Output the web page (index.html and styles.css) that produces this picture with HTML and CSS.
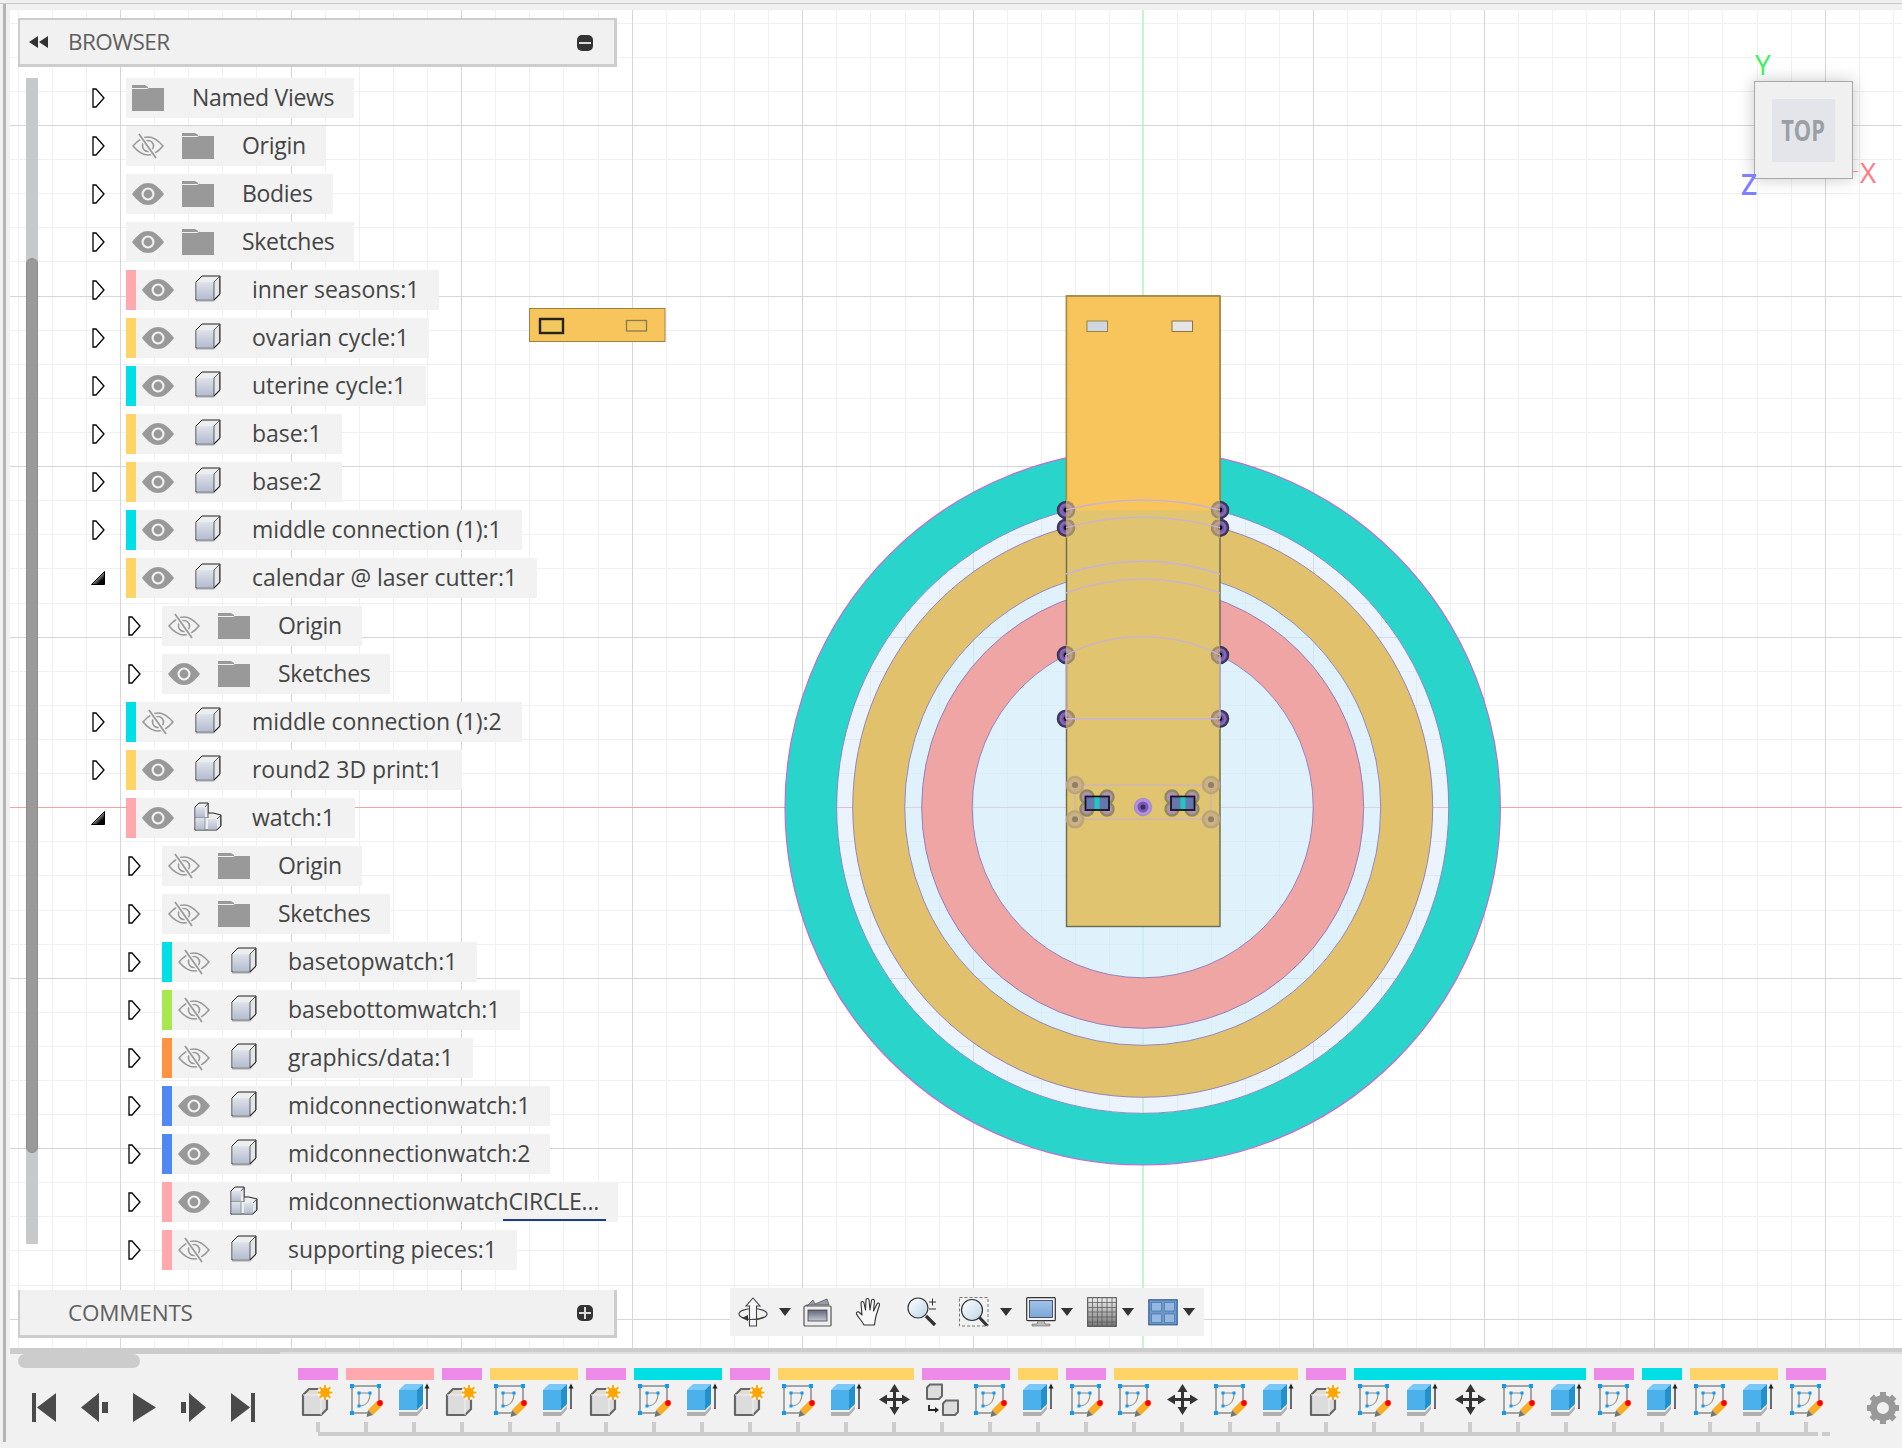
FILE: index.html
```html
<!DOCTYPE html>
<html>
<head>
    <title>Browser and Timeline</title>
    <link rel="stylesheet" href="styles.css">
</head>
<body>
    <!-- icon library -->
    <svg class="icon-defs" xmlns="http://www.w3.org/2000/svg">
        <defs>
            <linearGradient id="cube-front" x1="0" y1="0" x2="0" y2="1"><stop offset="0" stop-color="#dfe2ea"/><stop offset="1" stop-color="#b3bccf"/></linearGradient>
            <linearGradient id="twist-fill" x1="0" y1="0" x2="1" y2="1"><stop offset=".3" stop-color="#eee"/><stop offset=".75" stop-color="#000"/></linearGradient>
            <linearGradient id="screen" x1="0" y1="0" x2="0" y2="1"><stop offset="0" stop-color="#9fc3ea"/><stop offset="1" stop-color="#7ea7d6"/></linearGradient>
            <linearGradient id="glass" x1="0" y1="0" x2="1" y2="1"><stop offset="0" stop-color="#fff"/><stop offset="1" stop-color="#bcd6e6"/></linearGradient>
            <linearGradient id="fade" x1="0" y1="0" x2="0" y2="1"><stop offset="0" stop-color="#eee"/><stop offset="1" stop-color="#777"/></linearGradient>
            <linearGradient id="slate" x1="0" y1="0" x2="0" y2="1"><stop offset="0" stop-color="#5f6678"/><stop offset="1" stop-color="#c4c8d2"/></linearGradient>
        </defs>
        <symbol id="twist-closed" viewBox="0 0 13 20"><path d="M1 1 L4 1 L12 10 L4 19 L1 19 Z" fill="#fff" stroke="#000" stroke-width="1.3"/></symbol>
        <symbol id="twist-open" viewBox="0 0 14 14"><path d="M13.5 .5 V13.5 H.5 Z" fill="url(#twist-fill)" stroke="#000"/></symbol>
        <symbol id="eye" viewBox="0 0 32 22"><path d="M0 11C6 3 11 0 16 0s10 3 16 11c-6 8-11 11-16 11S6 19 0 11z" fill="#999"/><circle cx="16" cy="11" r="6.5" fill="#f2f2f2"/><circle cx="16" cy="11" r="4.4" fill="#999"/></symbol>
        <symbol id="eye-off" viewBox="0 0 32 26"><path d="M1 13C7 6 11 4 16 4s9 2 15 9c-6 7-10 9-15 9S7 20 1 13z" fill="none" stroke="#999" stroke-width="1.6"/><circle cx="16" cy="13" r="5.5" fill="none" stroke="#999" stroke-width="1.6"/><path d="M7 1 L24 25" stroke="#f2f2f2" stroke-width="4.5"/><path d="M7 1 L24 25" stroke="#999" stroke-width="1.8"/></symbol>
        <symbol id="folder" viewBox="0 0 32 26"><path d="M0 0H13L16 2V3H0Z" fill="#999"/><path d="M0 4H15L17 3H32V26H0Z" fill="#999"/></symbol>
        <symbol id="cube" viewBox="0 0 26 27"><path d="M1 7 L7 1 H25 V19 L19 25 H1 Z" fill="#eee" stroke="#222" stroke-linejoin="round"/><path d="M1.5 7 H19 V24.5 H1.5Z" fill="url(#cube-front)"/><path d="M19 7 L24.5 1.5 V19 L19 24.5Z" fill="#e4e6ea" stroke="#222" stroke-width=".7"/><path d="M1 26 H19 L25 20" fill="none" stroke="#aaa"/></symbol>
        <symbol id="multi" viewBox="0 0 28 30"><path d="M1 5 L5 1 H14 V11 H19 L27 13 V24 L23 28 H1Z" fill="#eee" stroke="#222" stroke-linejoin="round"/><path d="M1.5 5 H11 V15 H1.5Z" fill="url(#cube-front)"/><path d="M1.5 16 H11 V27.5 H1.5Z" fill="url(#cube-front)"/><path d="M14 17 H23 V27.5 H14Z" fill="url(#cube-front)"/><path d="M11 5 L14 1.5 V16 M23 17 L26.5 13.5 V24 L23 27.5" fill="#e4e6ea" stroke="#222" stroke-width=".7"/><path d="M1 15.5 H14 M11 16 V28" stroke="#7f8592" stroke-width=".8"/></symbol>

        <symbol id="tl-star" viewBox="0 0 40 36"><path d="M5 13 L11 7 H29 V27 L23 33 H5 Z" fill="#dcdcdc" stroke="#666" stroke-width="2.2" stroke-linejoin="round"/><path d="M5 13 H23 V33 M23 13 L29 7" fill="none" stroke="#f4f4f4" stroke-width=".9"/><circle cx="27" cy="10.5" r="7.5" fill="#fff"/><path d="M27 3v15M19.5 10.5h15M21.7 5.2l10.6 10.6M32.3 5.2L21.7 15.8" stroke="#fff" stroke-width="3.8"/><circle cx="27" cy="10.5" r="4.8" fill="#ffa500"/><path d="M27 3v15M19.5 10.5h15M21.7 5.2l10.6 10.6M32.3 5.2L21.7 15.8" stroke="#ffa500" stroke-width="2.1"/></symbol>
        <symbol id="tl-sketch" viewBox="0 0 40 36"><path d="M6 4 H33 M6 4 V31 H22 M33 4 V18" fill="none" stroke="#8a8a8a" stroke-width="1.5"/><path d="M13 11 V24 M13 11 H24 M24 11 C24 19 20 24 13 24" fill="none" stroke="#888" stroke-width="1.1"/><g fill="#0d9af0"><rect x="4" y="2" width="4" height="4"/><rect x="31" y="2" width="4" height="4"/><rect x="4" y="29" width="4" height="4"/><rect x="11.5" y="9.5" width="3" height="3"/><rect x="22.5" y="9.5" width="3" height="3"/><rect x="11.5" y="22.5" width="3" height="3"/></g><path d="M31 19 L36 24 L27 33 L22 28 Z" fill="#f5b024"/><path d="M22 28 L27 33 L20.5 35 Z" fill="#777"/><circle cx="34" cy="21" r="2.9" fill="#f00"/></symbol>
        <symbol id="tl-extrude" viewBox="0 0 40 36"><path d="M5 8 L11 2 H29 L23 8Z" fill="#78c8fa"/><path d="M5 8 H23 V28 H5Z" fill="#4cb0ea"/><path d="M23 8 L29 2 V22 L23 28Z" fill="#2091cb"/><path d="M5 30 H23 L29 24 V27 L23 34 H5Z" fill="#b0b0b0"/><path d="M33 27 V5" stroke="#222" stroke-width="1.3"/><path d="M33 1.5 L35.5 6.5 H30.5Z" fill="#222"/></symbol>
        <symbol id="tl-move" viewBox="0 0 40 36"><path d="M20.5 2 L25.5 10 H22 V16 H28 V12.5 L36 17.5 L28 22.5 V19 H22 V25 H25.5 L20.5 33 L15.5 25 H19 V19 H13 V22.5 L5 17.5 L13 12.5 V16 H19 V10 H15.5Z" fill="#333"/></symbol>
        <symbol id="tl-align" viewBox="0 0 40 36"><path d="M5 5.5 L8 2.5 H20 V14 L17 17 H5Z" fill="#dcdcdc" stroke="#666" stroke-width="2" stroke-linejoin="round"/><path d="M21 21.5 L24 18.5 H36 V30 L33 33 H21Z" fill="#dcdcdc" stroke="#666" stroke-width="2" stroke-linejoin="round"/><path d="M7 23 V28 H14" fill="none" stroke="#222" stroke-width="1.8"/><path d="M17 28 L13 25 V31Z" fill="#222"/></symbol>

        <symbol id="tb-orbit" viewBox="0 0 30 30"><ellipse cx="15" cy="17" rx="14" ry="5.5" fill="none" stroke="#444" stroke-width="1.2"/><path d="M15 1 L22 9 H18.5 V29 H11.5 V9 H8Z" fill="#f4f6fa" stroke="#444" stroke-width="1.1"/><path d="M12 22.5 C16 22.6 22 22 26 20" fill="none" stroke="#444" stroke-width="1.2"/><path d="M4 21 L10 18 V24Z" fill="#333"/></symbol>
        <symbol id="tb-film" viewBox="0 0 30 30"><path d="M3 10 L10 3 L12 7 L24 2 L26 8 H3Z" fill="#9a9da4" stroke="#555" stroke-width=".8"/><rect x="1" y="9" width="27" height="20" rx="1" fill="#eee" stroke="#555" stroke-width="1.2"/><rect x="5" y="13" width="19" height="11" fill="url(#slate)" stroke="#444" stroke-width=".8"/></symbol>
        <symbol id="tb-hand" viewBox="0 0 30 30"><path d="M9 28 C7 24 3 20 1.5 17 C1 15 3 14 4.5 15.5 L7 18 L6 6 C6 4 8.5 4 9 6 L10.5 13 L11 3 C11 1 14 1 14 3 L15 13 L16.5 3.5 C17 1.5 19.5 2 19.5 4 L18.5 14 L22 7 C23 5 25 6.5 24.5 8 L21 19 C20 23 20 25 19.5 28 Z" fill="#f8f8f8" stroke="#333" stroke-width="1.1" stroke-linejoin="round"/></symbol>
        <symbol id="tb-zoom" viewBox="0 0 30 30"><path d="M19 19 L28 28" stroke="#333" stroke-width="3.4"/><circle cx="11" cy="11" r="10" fill="url(#glass)" stroke="#333" stroke-width="1.2"/><path d="M22 5 H29 M25.5 1.5 V8.5 M22 12 H29" stroke="#333" stroke-width="1"/></symbol>
        <symbol id="tb-window" viewBox="0 0 30 30"><rect x=".5" y=".5" width="28.5" height="28.5" fill="none" stroke="#777" stroke-dasharray="3 2"/><path d="M20 20 L28 28.5" stroke="#333" stroke-width="3.2"/><circle cx="13" cy="13" r="10.5" fill="url(#glass)" stroke="#333" stroke-width="1.2"/></symbol>
        <symbol id="tb-monitor" viewBox="0 0 30 30"><rect x=".7" y=".7" width="28.6" height="23" rx="1" fill="#f4f4f4" stroke="#333" stroke-width="1.2"/><rect x="3.5" y="3.5" width="23" height="17" fill="url(#screen)" stroke="#335" stroke-width=".8"/><path d="M12 24 H18 L19 27 H24 V29 H6 V27 H11Z" fill="#bbb" stroke="#666" stroke-width=".6"/></symbol>
        <symbol id="tb-grid" viewBox="0 0 30 30"><rect x=".7" y=".7" width="28.6" height="28.6" fill="url(#fade)" stroke="#444"/><path d="M5.5 1V29M10.5 1V29M15 1V29M20 1V29M25 1V29M1 5.5H29M1 10.5H29M1 15H29M1 20H29M1 25H29" stroke="#555" stroke-width=".7"/></symbol>
        <symbol id="tb-views" viewBox="0 0 30 30"><rect x=".8" y="2.800" width="28.4" height="25" fill="#6f97c8" stroke="#2b5a92" stroke-width="1.1"/><path d="M3.5 5.5H13.5V14H3.5ZM16.5 5.5H26.5V14H16.5ZM3.5 17H13.5V25.5H3.5ZM16.5 17H26.5V25.5H16.5Z" fill="#93b9e3" stroke="#3a6aa2" stroke-width=".6"/></symbol>
    </svg>

    <div class="top-strip"></div>
    <div class="frame-left"></div>

    <div class="canvas">
        <svg class="drawing" xmlns="http://www.w3.org/2000/svg" width="1892" height="1338" viewBox="10 10 1892 1338">
            <defs>
                <clipPath id="in-plate"><rect x="1066" y="296" width="154" height="631"/></clipPath>
                <g id="vtx"><circle r="8" fill="#8a64c4" stroke="#3d3955" stroke-width="2.6"/><circle r="4.2" fill="#6b58a0"/><circle r="2.4" fill="#111"/></g>
                <g id="vtx-pale"><circle r="8" fill="#ccb183" stroke="#bca47c" stroke-width="2.6"/><circle r="3" fill="#8f7f6a"/></g>
                <g id="vtx-mid"><circle r="6.5" fill="#b48fb4" stroke="#8e8a5f" stroke-width="2.4"/></g>
            </defs>
            <!-- grid -->
            <path class="grid-minor" d="M18 10V1348M52 10V1348M86 10V1348M154 10V1348M188 10V1348M222 10V1348M256 10V1348M325 10V1348M359 10V1348M393 10V1348M427 10V1348M495 10V1348M529 10V1348M563 10V1348M598 10V1348M666 10V1348M700 10V1348M734 10V1348M768 10V1348M836 10V1348M870 10V1348M905 10V1348M939 10V1348M1007 10V1348M1041 10V1348M1075 10V1348M1109 10V1348M1177 10V1348M1211 10V1348M1245 10V1348M1279 10V1348M1347 10V1348M1381 10V1348M1416 10V1348M1450 10V1348M1518 10V1348M1552 10V1348M1586 10V1348M1620 10V1348M1688 10V1348M1722 10V1348M1757 10V1348M1791 10V1348M1859 10V1348M1893 10V1348"/>
            <path class="grid-minor" d="M10 23H1902M10 57H1902M10 91H1902M10 159H1902M10 193H1902M10 227H1902M10 261H1902M10 330H1902M10 364H1902M10 398H1902M10 432H1902M10 500H1902M10 534H1902M10 568H1902M10 603H1902M10 671H1902M10 705H1902M10 739H1902M10 773H1902M10 841H1902M10 875H1902M10 910H1902M10 944H1902M10 1012H1902M10 1046H1902M10 1080H1902M10 1114H1902M10 1182H1902M10 1216H1902M10 1250H1902M10 1285H1902"/>
            <path class="grid-major" d="M120 10V1348M291 10V1348M461 10V1348M632 10V1348M802 10V1348M973 10V1348M1313 10V1348M1484 10V1348M1654 10V1348M1825 10V1348M10 125H1902M10 296H1902M10 466H1902M10 637H1902M10 978H1902M10 1148H1902M10 1319H1902"/>
            <path class="axis-y" d="M1143 10V1348"/>
            <path class="axis-x" d="M10 807H1902"/>

            <!-- dial rings -->
            <circle class="gap-outer" cx="1142.7" cy="807.3" r="306"/>
            <circle class="gap-inner" cx="1142.7" cy="807.3" r="238"/>
            <circle class="ring-teal" cx="1142.7" cy="807.3" r="331.9"/>
            <circle class="ring-gold" cx="1142.7" cy="807.3" r="264"/>
            <circle class="ring-pink" cx="1142.7" cy="807.3" r="195.8"/>
            <circle class="edge-outer" cx="1142.7" cy="807.3" r="357.7"/>
            <circle class="edge" cx="1142.7" cy="807.3" r="306"/>
            <circle class="edge" cx="1142.7" cy="807.3" r="290"/>
            <circle class="edge" cx="1142.7" cy="807.3" r="238"/>
            <circle class="edge" cx="1142.7" cy="807.3" r="221"/>
            <circle class="edge" cx="1142.7" cy="807.3" r="170.5"/>

            <!-- watch strap plate -->
            <rect class="plate" x="1066.5" y="296" width="153.5" height="630.5"/>
            <rect class="plate-top" x="1067" y="296.5" width="152.5" height="214"/>
            <path class="plate-top-edge" d="M1066.5 510V296H1220V510"/>
            <rect class="slot-a" x="1087" y="321" width="20.5" height="10.5"/>
            <rect class="slot-b" x="1172" y="321" width="20.5" height="10.5"/>

            <use href="#vtx" x="1066" y="510"/><use href="#vtx" x="1066" y="527.7"/><use href="#vtx" x="1066" y="655"/><use href="#vtx" x="1066" y="718.7"/>
            <use href="#vtx" x="1220" y="510"/><use href="#vtx" x="1220" y="527.7"/><use href="#vtx" x="1220" y="655"/><use href="#vtx" x="1220" y="718.7"/>
            <g class="wash" clip-path="url(#in-plate)">
                <circle cx="1066" cy="510" r="10.5"/><circle cx="1066" cy="527.7" r="10.5"/><circle cx="1066" cy="655" r="10.5"/><circle cx="1066" cy="718.7" r="10.5"/>
                <circle cx="1220" cy="510" r="10.5"/><circle cx="1220" cy="527.7" r="10.5"/><circle cx="1220" cy="655" r="10.5"/><circle cx="1220" cy="718.7" r="10.5"/>
            </g>

            <path class="sketch-arc" d="M1066 510A306 306 0 0 1 1220 510M1066 527.7A290 290 0 0 1 1220 527.7M1066 574A238 238 0 0 1 1220 574M1066 593A221 221 0 0 1 1220 593M1066 655A170.5 170.5 0 0 1 1220 655M1066 718.7H1220M1066 655V718.7M1220 655V718.7"/>
            <rect class="sketch-box" x="1075" y="785" width="136" height="34.3"/>

            <use href="#vtx-pale" x="1075" y="785"/><use href="#vtx-pale" x="1211" y="785"/><use href="#vtx-pale" x="1075" y="819.3"/><use href="#vtx-pale" x="1211" y="819.3"/>
            <use href="#vtx-mid" x="1087" y="797"/><use href="#vtx-mid" x="1107" y="797"/><use href="#vtx-mid" x="1087" y="809"/><use href="#vtx-mid" x="1107" y="809"/>
            <use href="#vtx-mid" x="1172" y="797"/><use href="#vtx-mid" x="1192" y="797"/><use href="#vtx-mid" x="1172" y="809"/><use href="#vtx-mid" x="1192" y="809"/>
            <rect class="slot-black" x="1085.5" y="796.5" width="23.5" height="13.5"/>
            <rect class="slot-core" x="1094.5" y="797.5" width="5" height="11.5"/>
            <rect class="slot-black" x="1171" y="796.5" width="23.5" height="13.5"/>
            <rect class="slot-core" x="1180.5" y="797.5" width="5" height="11.5"/>
            <circle class="origin-ring" cx="1143" cy="807" r="8.5"/>
            <circle class="origin-mid" cx="1143" cy="807" r="5.5"/>
            <circle class="origin-dot" cx="1143" cy="807" r="2.6"/>

            <!-- loose piece -->
            <rect class="loose" x="529.5" y="308.5" width="135.5" height="33"/>
            <rect class="loose-slot-a" x="540" y="319" width="23" height="14"/>
            <rect class="loose-slot-b" x="626.5" y="320.5" width="20" height="10.5"/>
        </svg>

        <!-- browser panel -->
        <div class="browser">
            <div class="panel-head">
                <svg class="rewind" width="19" height="12" viewBox="0 0 19 12"><path d="M0 6 L9 0 V12Z M10 6 L19 0 V12Z" fill="#333"/></svg>
                <span class="panel-title">BROWSER</span>
                <span class="panel-btn"><i class="minus"></i></span>
            </div>
            <div class="tree">
                <div class="scroll-track"><div class="scroll-thumb"></div></div>
                <div class="rows">
                    <div class="row"><svg class="twist"><use href="#twist-closed"/></svg><div class="item plain"><svg class="folder"><use href="#folder"/></svg><span class="label">Named Views</span></div></div>
                    <div class="row"><svg class="twist"><use href="#twist-closed"/></svg><div class="item plain"><svg class="eye"><use href="#eye-off"/></svg><svg class="folder after-eye"><use href="#folder"/></svg><span class="label">Origin</span></div></div>
                    <div class="row"><svg class="twist"><use href="#twist-closed"/></svg><div class="item plain"><svg class="eye"><use href="#eye"/></svg><svg class="folder after-eye"><use href="#folder"/></svg><span class="label">Bodies</span></div></div>
                    <div class="row"><svg class="twist"><use href="#twist-closed"/></svg><div class="item plain"><svg class="eye"><use href="#eye"/></svg><svg class="folder after-eye"><use href="#folder"/></svg><span class="label">Sketches</span></div></div>
                    <div class="row"><svg class="twist"><use href="#twist-closed"/></svg><div class="item"><span class="swatch pink"></span><svg class="eye"><use href="#eye"/></svg><svg class="cube"><use href="#cube"/></svg><span class="label part">inner seasons:1</span></div></div>
                    <div class="row"><svg class="twist"><use href="#twist-closed"/></svg><div class="item"><span class="swatch yellow"></span><svg class="eye"><use href="#eye"/></svg><svg class="cube"><use href="#cube"/></svg><span class="label part">ovarian cycle:1</span></div></div>
                    <div class="row"><svg class="twist"><use href="#twist-closed"/></svg><div class="item"><span class="swatch cyan"></span><svg class="eye"><use href="#eye"/></svg><svg class="cube"><use href="#cube"/></svg><span class="label part">uterine cycle:1</span></div></div>
                    <div class="row"><svg class="twist"><use href="#twist-closed"/></svg><div class="item"><span class="swatch yellow"></span><svg class="eye"><use href="#eye"/></svg><svg class="cube"><use href="#cube"/></svg><span class="label part">base:1</span></div></div>
                    <div class="row"><svg class="twist"><use href="#twist-closed"/></svg><div class="item"><span class="swatch yellow"></span><svg class="eye"><use href="#eye"/></svg><svg class="cube"><use href="#cube"/></svg><span class="label part">base:2</span></div></div>
                    <div class="row"><svg class="twist"><use href="#twist-closed"/></svg><div class="item"><span class="swatch cyan"></span><svg class="eye"><use href="#eye"/></svg><svg class="cube"><use href="#cube"/></svg><span class="label part">middle connection (1):1</span></div></div>
                    <div class="row"><svg class="twist open"><use href="#twist-open"/></svg><div class="item"><span class="swatch yellow"></span><svg class="eye"><use href="#eye"/></svg><svg class="cube"><use href="#cube"/></svg><span class="label part">calendar @ laser cutter:1</span></div></div>
                    <div class="row nested"><svg class="twist"><use href="#twist-closed"/></svg><div class="item plain"><svg class="eye"><use href="#eye-off"/></svg><svg class="folder after-eye"><use href="#folder"/></svg><span class="label">Origin</span></div></div>
                    <div class="row nested"><svg class="twist"><use href="#twist-closed"/></svg><div class="item plain"><svg class="eye"><use href="#eye"/></svg><svg class="folder after-eye"><use href="#folder"/></svg><span class="label">Sketches</span></div></div>
                    <div class="row"><svg class="twist"><use href="#twist-closed"/></svg><div class="item"><span class="swatch cyan"></span><svg class="eye"><use href="#eye-off"/></svg><svg class="cube"><use href="#cube"/></svg><span class="label part">middle connection (1):2</span></div></div>
                    <div class="row"><svg class="twist"><use href="#twist-closed"/></svg><div class="item"><span class="swatch yellow"></span><svg class="eye"><use href="#eye"/></svg><svg class="cube"><use href="#cube"/></svg><span class="label part">round2 3D print:1</span></div></div>
                    <div class="row"><svg class="twist open"><use href="#twist-open"/></svg><div class="item"><span class="swatch pink"></span><svg class="eye"><use href="#eye"/></svg><svg class="cube multi"><use href="#multi"/></svg><span class="label part">watch:1</span></div></div>
                    <div class="row nested"><svg class="twist"><use href="#twist-closed"/></svg><div class="item plain"><svg class="eye"><use href="#eye-off"/></svg><svg class="folder after-eye"><use href="#folder"/></svg><span class="label">Origin</span></div></div>
                    <div class="row nested"><svg class="twist"><use href="#twist-closed"/></svg><div class="item plain"><svg class="eye"><use href="#eye-off"/></svg><svg class="folder after-eye"><use href="#folder"/></svg><span class="label">Sketches</span></div></div>
                    <div class="row nested"><svg class="twist"><use href="#twist-closed"/></svg><div class="item"><span class="swatch cyan"></span><svg class="eye"><use href="#eye-off"/></svg><svg class="cube"><use href="#cube"/></svg><span class="label part">basetopwatch:1</span></div></div>
                    <div class="row nested"><svg class="twist"><use href="#twist-closed"/></svg><div class="item"><span class="swatch green"></span><svg class="eye"><use href="#eye-off"/></svg><svg class="cube"><use href="#cube"/></svg><span class="label part">basebottomwatch:1</span></div></div>
                    <div class="row nested"><svg class="twist"><use href="#twist-closed"/></svg><div class="item"><span class="swatch orange"></span><svg class="eye"><use href="#eye-off"/></svg><svg class="cube"><use href="#cube"/></svg><span class="label part">graphics/data:1</span></div></div>
                    <div class="row nested"><svg class="twist"><use href="#twist-closed"/></svg><div class="item"><span class="swatch blue"></span><svg class="eye"><use href="#eye"/></svg><svg class="cube"><use href="#cube"/></svg><span class="label part">midconnectionwatch:1</span></div></div>
                    <div class="row nested"><svg class="twist"><use href="#twist-closed"/></svg><div class="item"><span class="swatch blue"></span><svg class="eye"><use href="#eye"/></svg><svg class="cube"><use href="#cube"/></svg><span class="label part">midconnectionwatch:2</span></div></div>
                    <div class="row nested"><svg class="twist"><use href="#twist-closed"/></svg><div class="item clipped"><span class="swatch pink"></span><svg class="eye"><use href="#eye"/></svg><svg class="cube multi"><use href="#multi"/></svg><span class="label part tight">midconnectionwatchCIRCLE...</span><span class="rename-line"></span></div></div>
                    <div class="row nested"><svg class="twist"><use href="#twist-closed"/></svg><div class="item"><span class="swatch pink"></span><svg class="eye"><use href="#eye-off"/></svg><svg class="cube"><use href="#cube"/></svg><span class="label part">supporting pieces:1</span></div></div>
                </div>
            </div>
            <div class="panel-head comments">
                <span class="panel-title">COMMENTS</span>
                <span class="panel-btn"><i class="minus"></i><i class="plus"></i></span>
            </div>
        </div>

        <!-- view cube -->
        <div class="viewcube">
            <div class="cube-face"><div class="cube-label"><span class="cube-text">TOP</span></div></div>
            <span class="axis-letter letter-y">Y</span>
            <span class="axis-letter letter-x">X</span>
            <span class="axis-tick"></span>
            <span class="axis-letter letter-z">Z</span>
        </div>

        <!-- navigation bar -->
        <div class="navbar">
            <svg class="nav-icon"><use href="#tb-orbit"/></svg>
            <span class="nav-drop gap-s"></span>
            <svg class="nav-icon gap-f"><use href="#tb-film"/></svg>
            <svg class="nav-icon gap-l"><use href="#tb-hand"/></svg>
            <svg class="nav-icon gap-l"><use href="#tb-zoom"/></svg>
            <svg class="nav-icon gap-l"><use href="#tb-window"/></svg>
            <span class="nav-drop gap-s"></span>
            <svg class="nav-icon gap-m"><use href="#tb-monitor"/></svg>
            <span class="nav-drop gap-xs"></span>
            <svg class="nav-icon gap-m"><use href="#tb-grid"/></svg>
            <span class="nav-drop gap-xs"></span>
            <svg class="nav-icon gap-m"><use href="#tb-views"/></svg>
            <span class="nav-drop gap-xs"></span>
        </div>
    </div>

    <!-- timeline -->
    <div class="timeline">
        <div class="tl-rail"><div class="tl-rail-left"></div></div>
        <div class="tl-thumb"></div>
        <div class="tl-main">
            <div class="tl-controls">
                <svg class="ctl-first" viewBox="0 0 24 29"><path d="M0 0H4V29H0ZM24 0V29L5 14.5Z" fill="#4a4a4a"/></svg>
                <svg class="ctl-prev" viewBox="0 0 27 29"><path d="M18 0V29L0 14.5ZM21 9H27V20H21Z" fill="#4a4a4a"/></svg>
                <svg class="ctl-play" viewBox="0 0 23 29"><path d="M0 0L23 14.5L0 29Z" fill="#4a4a4a"/></svg>
                <svg class="ctl-next" viewBox="0 0 25 29"><path d="M0 9H5V20H0ZM8 0L25 14.5L8 29Z" fill="#4a4a4a"/></svg>
                <svg class="ctl-last" viewBox="0 0 24 29"><path d="M0 0L19 14.5L0 29ZM20 0H24V29H20Z" fill="#4a4a4a"/></svg>
            </div>
            <div class="tl-track">
                <div class="tl-groups">
                    <div class="group"><div class="group-bar magenta"></div><div class="cells"><div class="cell"><svg><use href="#tl-star"/></svg></div></div></div>
                    <div class="group"><div class="group-bar pink"></div><div class="cells"><div class="cell"><svg><use href="#tl-sketch"/></svg></div><div class="cell"><svg><use href="#tl-extrude"/></svg></div></div></div>
                    <div class="group"><div class="group-bar magenta"></div><div class="cells"><div class="cell"><svg><use href="#tl-star"/></svg></div></div></div>
                    <div class="group"><div class="group-bar yellow"></div><div class="cells"><div class="cell"><svg><use href="#tl-sketch"/></svg></div><div class="cell"><svg><use href="#tl-extrude"/></svg></div></div></div>
                    <div class="group"><div class="group-bar magenta"></div><div class="cells"><div class="cell"><svg><use href="#tl-star"/></svg></div></div></div>
                    <div class="group"><div class="group-bar cyan"></div><div class="cells"><div class="cell"><svg><use href="#tl-sketch"/></svg></div><div class="cell"><svg><use href="#tl-extrude"/></svg></div></div></div>
                    <div class="group"><div class="group-bar magenta"></div><div class="cells"><div class="cell"><svg><use href="#tl-star"/></svg></div></div></div>
                    <div class="group"><div class="group-bar yellow"></div><div class="cells"><div class="cell"><svg><use href="#tl-sketch"/></svg></div><div class="cell"><svg><use href="#tl-extrude"/></svg></div><div class="cell"><svg><use href="#tl-move"/></svg></div></div></div>
                    <div class="group"><div class="group-bar magenta"></div><div class="cells"><div class="cell"><svg><use href="#tl-align"/></svg></div><div class="cell"><svg><use href="#tl-sketch"/></svg></div></div></div>
                    <div class="group"><div class="group-bar yellow"></div><div class="cells"><div class="cell"><svg><use href="#tl-extrude"/></svg></div></div></div>
                    <div class="group"><div class="group-bar magenta"></div><div class="cells"><div class="cell"><svg><use href="#tl-sketch"/></svg></div></div></div>
                    <div class="group"><div class="group-bar yellow"></div><div class="cells"><div class="cell"><svg><use href="#tl-sketch"/></svg></div><div class="cell"><svg><use href="#tl-move"/></svg></div><div class="cell"><svg><use href="#tl-sketch"/></svg></div><div class="cell"><svg><use href="#tl-extrude"/></svg></div></div></div>
                    <div class="group"><div class="group-bar magenta"></div><div class="cells"><div class="cell"><svg><use href="#tl-star"/></svg></div></div></div>
                    <div class="group"><div class="group-bar cyan"></div><div class="cells"><div class="cell"><svg><use href="#tl-sketch"/></svg></div><div class="cell"><svg><use href="#tl-extrude"/></svg></div><div class="cell"><svg><use href="#tl-move"/></svg></div><div class="cell"><svg><use href="#tl-sketch"/></svg></div><div class="cell"><svg><use href="#tl-extrude"/></svg></div></div></div>
                    <div class="group"><div class="group-bar magenta"></div><div class="cells"><div class="cell"><svg><use href="#tl-sketch"/></svg></div></div></div>
                    <div class="group"><div class="group-bar cyan"></div><div class="cells"><div class="cell"><svg><use href="#tl-extrude"/></svg></div></div></div>
                    <div class="group"><div class="group-bar yellow"></div><div class="cells"><div class="cell"><svg><use href="#tl-sketch"/></svg></div><div class="cell"><svg><use href="#tl-extrude"/></svg></div></div></div>
                    <div class="group"><div class="group-bar magenta"></div><div class="cells"><div class="cell"><svg><use href="#tl-sketch"/></svg></div></div></div>
                </div>
                <div class="tl-ruler"><div class="ruler-line"></div><div class="ruler-dash"></div></div>
            </div>
            <svg class="gear" viewBox="0 0 32 32"><circle cx="16" cy="16" r="9.5" fill="none" stroke="#999" stroke-width="7"/><path d="M16 0v6M16 26v6M0 16h6M26 16h6M4.700 4.700l4.200 4.200M23.100 23.100l4.200 4.200M27.300 4.700l-4.200 4.200M8.900 23.100l-4.200 4.200" stroke="#999" stroke-width="6"/></svg>
        </div>
    </div>
</body>
</html>
```

FILE: styles.css
```css
* { box-sizing: border-box; }
body { margin: 0; width: 1902px; height: 1448px; overflow: hidden; position: relative; background-color: #f1f1f1; font-family: "Open Sans", Arial, sans-serif; }
.icon-defs { position: absolute; width: 0; height: 0; }

.top-strip { height: 10px; padding-top: 3px; background-color: #f0f0f0; }
.top-strip::before { content: ""; display: block; height: 1px; background-color: #c8c8c8; }
.frame-left { position: absolute; left: 3px; top: 4px; width: 3px; height: 1438px; background-color: #b4b4b4; }

/* canvas */
.canvas { position: relative; margin-left: 10px; height: 1338px; background-color: #fff; overflow: hidden; }
.drawing { display: block; }
.grid-minor { stroke: #f0f0f0; stroke-width: 1; shape-rendering: crispEdges; fill: none; }
.grid-major { stroke: #d6d6d6; stroke-width: 1; shape-rendering: crispEdges; fill: none; }
.axis-y { stroke: #b2f5bb; stroke-width: 1.5; fill: none; }
.axis-x { stroke: #f2a3a6; stroke-width: 1; shape-rendering: crispEdges; fill: none; }
.gap-outer { fill: #cfe4fa; fill-opacity: .42; }
.gap-inner { fill: #cfeffa; fill-opacity: .42; }
.ring-teal { fill: none; stroke: #29d5cb; stroke-width: 51.6; }
.ring-gold { fill: none; stroke: #e2c16d; stroke-width: 52; }
.ring-pink { fill: none; stroke: #f0a5a5; stroke-width: 50.6; }
.edge { fill: none; stroke: #7f70c0; stroke-width: .8; }
.edge-outer { fill: none; stroke: #c46ad8; stroke-width: 1.2; }
.plate { fill: #e0c470; stroke: #6b6a52; stroke-width: 1.4; }
.plate-top { fill: #f7c55c; }
.plate-top-edge { fill: none; stroke: #a88a3e; stroke-width: 1.4; }
.slot-a { fill: #cfd8e0; stroke: #9b8145; stroke-width: 1; }
.slot-b { fill: #e4e4e4; stroke: #8a7442; stroke-width: 1; }
.wash circle { fill: #e0c470; fill-opacity: .6; }
.sketch-arc { fill: none; stroke: #c7b2d8; stroke-width: 1.4; }
.sketch-box { fill: none; stroke: #c9b3c4; stroke-width: 1.2; }
.slot-black { fill: #6577ae; stroke: #15151f; stroke-width: 1.8; }
.slot-core { fill: #22c6c0; }
.origin-ring { fill: #b394dc; stroke: #a690c4; stroke-width: 1.5; }
.origin-mid { fill: #7c55c2; }
.origin-dot { fill: #3a3450; }
.loose { fill: #f7c55c; stroke: #9c8240; stroke-width: 1; }
.loose-slot-a { fill: #f2c75e; stroke: #26231a; stroke-width: 2.4; }
.loose-slot-b { fill: #f2c75e; stroke: #8c7a4c; stroke-width: 1.3; }

/* browser panel */
.browser { position: absolute; left: 8px; top: 8px; width: 599px; height: 1320px; display: flex; flex-direction: column; }
.panel-head { height: 49px; flex-shrink: 0; display: flex; align-items: center; background-color: #f1f1f1; border: 2px solid #cdcdcd; border-bottom-width: 3px; border-right-width: 3px; padding-left: 9px; position: relative; }
.comments { height: 48px; border-top: 0; padding-left: 48px; }
.rewind { flex-shrink: 0; }
.panel-title { margin-left: 20px; padding-bottom: 1px; font-size: 22.5px; color: #5f5f5f; letter-spacing: -.55px; }
.comments .panel-title { margin-left: 0; letter-spacing: -.2px; }
.panel-btn { position: absolute; right: 21px; top: 15px; width: 16px; height: 16px; border-radius: 5px; background-color: #333; }
.minus { position: absolute; left: 2px; top: 7px; width: 12px; height: 2px; background-color: #ddd; }
.plus { position: absolute; left: 7px; top: 2px; width: 2px; height: 12px; background-color: #ddd; }

.tree { flex: 1; display: flex; padding-top: 11px; }
.scroll-track { width: 12px; height: 1166px; margin-left: 8px; padding-top: 180px; background-color: #c8c9cb; flex-shrink: 0; }
.scroll-thumb { height: 895px; background-color: #9a9a9a; border: 1px solid #8c8c8c; border-radius: 6px; }
.rows { margin-left: 54px; }
.row { display: flex; align-items: center; height: 40px; margin-bottom: 8px; }
.nested { padding-left: 36px; }
.twist { width: 13px; height: 20px; margin-right: 21px; flex-shrink: 0; }
.twist.open { width: 14px; height: 14px; margin-left: -1px; margin-right: 21px; margin-top: 0; }
.item { position: relative; height: 40px; display: flex; align-items: center; background-color: #f2f2f2; padding-right: 20px; }
.plain { padding-left: 6px; }
.clipped { width: 456px; padding-right: 0; }
.swatch { width: 10px; height: 40px; margin-right: 6px; }
.pink { background-color: #ffa8ad; }
.yellow { background-color: #ffd466; }
.cyan { background-color: #00dee6; }
.green { background-color: #a7e84e; }
.orange { background-color: #ff9344; }
.blue { background-color: #4f88f2; }
.magenta { background-color: #ee8ae8; }
.eye { width: 32px; height: 26px; flex-shrink: 0; }
.folder { width: 32px; height: 26px; flex-shrink: 0; }
.after-eye { margin-left: 18px; }
.cube { width: 26px; height: 27px; margin-left: 21px; margin-top: -3px; flex-shrink: 0; }
.cube.multi { width: 28px; height: 30px; margin-left: 20px; margin-right: -1px; }
.label { margin-left: 28px; padding-bottom: 3px; font-size: 23px; color: #454545; white-space: nowrap; letter-spacing: -.3px; }
.part { margin-left: 31px; letter-spacing: -.05px; }
.tight { letter-spacing: -.2px; }
.rename-line { position: absolute; left: 341px; top: 37px; width: 103px; height: 2px; background-color: #1c3c8c; }

/* view cube */
.viewcube { position: absolute; left: 1731px; top: 40px; width: 146px; height: 147px; }
.cube-face { position: absolute; left: 13px; top: 31px; width: 99px; height: 98px; display: flex; align-items: center; justify-content: center; background-color: #f0f0f0; border: 1px solid #a8a8a8; box-shadow: 0 0 16px rgba(0,0,0,.22); }
.cube-label { width: 63px; height: 63px; line-height: 62px; text-align: center; background-color: #e3e5ea; color: #9a9ea5; font-size: 28px; font-weight: 700; font-family: "Open Sans", sans-serif; }
.cube-text { display: inline-block; transform: scaleX(.78); }
.axis-letter { position: absolute; font-size: 28px; line-height: 28px; font-family: "Open Sans", sans-serif; }
.letter-y { left: 14px; top: 0; color: #3df060; }
.letter-x { left: 119px; top: 108px; color: #ff7b80; }
.letter-z { left: 0; top: 120px; color: #8080ff; font-weight: 600; }
.axis-tick { position: absolute; left: 112px; top: 121px; width: 5px; height: 1px; background-color: #ff7b80; }

/* navigation bar */
.navbar { position: absolute; left: 720px; top: 1278px; width: 474px; height: 48px; display: flex; align-items: center; padding-left: 8px; background-color: #f1f1f1; }
.nav-icon { width: 30px; height: 30px; flex-shrink: 0; }
.nav-drop { width: 0; height: 0; border-left: 6px solid transparent; border-right: 6px solid transparent; border-top: 8px solid #333; flex-shrink: 0; }
.gap-xs { margin-left: 5px; }
.gap-s { margin-left: 11px; }
.gap-f { margin-left: 12px; }
.gap-m { margin-left: 14px; }
.gap-l { margin-left: 22px; }

/* timeline */
.timeline { height: 100px; }
.tl-rail { height: 6px; margin-left: 10px; background: linear-gradient(#ccc 4px, #dedede 4px); }
.tl-rail-left { width: 270px; height: 6px; background-color: #ccc; }
.tl-thumb { width: 122px; height: 14px; margin-left: 18px; border-radius: 7px; background-color: #ccc; }
.tl-main { display: flex; }
.tl-controls { width: 298px; flex-shrink: 0; display: flex; padding: 25px 0 0 32px; gap: 25px; align-items: flex-start; }
.ctl-first, .ctl-last { width: 24px; height: 29px; }
.ctl-prev { width: 27px; height: 29px; }
.ctl-play { width: 23px; height: 29px; }
.ctl-next { width: 25px; height: 29px; }
.tl-groups { display: flex; gap: 8px; }
.group-bar { height: 12px; }
.cells { display: flex; gap: 8px; margin-top: 2px; }
.cell { width: 40px; }
.cell svg { display: block; width: 40px; height: 36px; }
.cell::after { content: ""; display: block; width: 4px; height: 10px; margin: 4px auto 0; background-color: #ccc; }
.tl-ruler { display: flex; padding-left: 20px; gap: 4px; }
.ruler-line { width: 1500px; height: 4px; background-color: #ccc; }
.ruler-dash { width: 8px; height: 4px; background-color: #ccc; }
.gear { width: 32px; height: 32px; margin: 24px 0 0 37px; flex-shrink: 0; }
```
